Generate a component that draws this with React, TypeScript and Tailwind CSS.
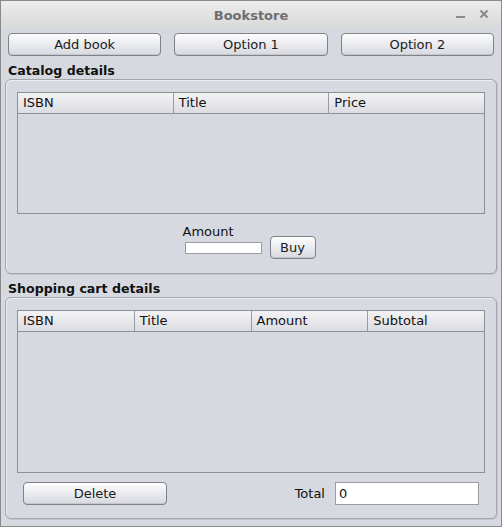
import React from 'react';

const font = { fontFamily: '"DejaVu Sans", "Noto Sans", sans-serif' };

const SwingButton: React.FC<{ label: string; className?: string }> = ({ label, className = '' }) => (
  <button
    className={`h-[23px] rounded-[4px] border border-[#80828a] bg-gradient-to-b from-[#fdfdfe] to-[#d7d9df] text-[13px] text-[#1b1b22] shadow-[inset_0_-1px_0_#c4c6cc] ${className}`}
  >
    {label}
  </button>
);

const Table: React.FC<{ columns: string[]; height: string }> = ({ columns, height }) => (
  <div className={`border border-[#8e9096] bg-[#d6d9df] ${height}`}>
    <div className="flex h-[21px] border-b border-[#8e9096] bg-gradient-to-b from-[#f3f3f5] to-[#dcdde2]">
      {columns.map((c, i) => (
        <div
          key={c}
          className={`flex flex-1 items-center pl-[5px] text-[13px] text-[#111] ${i < columns.length - 1 ? 'border-r border-[#9a9ca2]' : ''}`}
        >
          {c}
        </div>
      ))}
    </div>
  </div>
);

const Section: React.FC<{ title: string; children: React.ReactNode; className?: string }> = ({ title, children, className = '' }) => (
  <div className="flex flex-col">
    <div className="h-[15px] pl-[3px] text-[12.6px] font-bold leading-[15px] text-[#111]">{title}</div>
    <div
      className={`rounded-[6px] border border-[#a4a6ac] bg-[#d6d9df] shadow-[inset_1px_1px_0_#eceef1,1px_1px_0_#c2c4c9] ${className}`}
    >
      {children}
    </div>
  </div>
);

export default function App() {
  return (
    <div style={font} className="flex h-[527px] w-[502px] flex-col overflow-hidden border border-[#8a8a8a] bg-[#d6d9df]">
      {/* title bar */}
      <div className="relative flex h-[26px] items-center justify-center bg-gradient-to-b from-[#ececec] to-[#dadada] pt-[3px]">
        <span className="text-[13px] font-bold text-[#6e6e6e]">Bookstore</span>
        <div className="absolute right-[12px] top-[8px] flex items-center gap-[14px] text-[#8a8a8a]">
          <svg width="9" height="10" viewBox="0 0 9 10">
            <rect x="0" y="7" width="9" height="2" fill="currentColor" />
          </svg>
          <svg width="10" height="10" viewBox="0 0 10 10">
            <path d="M1.5 1.5 L8.5 8.5 M8.5 1.5 L1.5 8.5" stroke="currentColor" strokeWidth="2" />
          </svg>
        </div>
      </div>

      {/* body */}
      <div className="flex flex-1 flex-col px-[4px] pt-[6px]">
        <div className="flex gap-[13px] px-[3px]">
          <SwingButton label="Add book" className="w-[154px]" />
          <SwingButton label="Option 1" className="w-[154px]" />
          <SwingButton label="Option 2" className="w-[154px]" />
        </div>

        <div className="mt-[7px]">
          <Section title="Catalog details" className="mt-[1px] h-[195px] px-[11px] pt-[12px]">
            <Table columns={['ISBN', 'Title', 'Price']} height="h-[122px]" />
            <div className="mt-[10px] flex items-start justify-center gap-[8px] pr-[4px]">
              <div className="flex flex-col">
                <span className="text-[13px] leading-[15px] text-[#111]">Amount</span>
                <div className="ml-[2px] mt-[3px] h-[12px] w-[77px] border border-[#9a9ca2] bg-white" />
              </div>
              <SwingButton label="Buy" className="mt-[12px] w-[46px]" />
            </div>
          </Section>
        </div>

        <div className="mt-[7px]">
          <Section title="Shopping cart details" className="mt-[1px] h-[222px] px-[11px] pt-[12px]">
            <Table columns={['ISBN', 'Title', 'Amount', 'Subtotal']} height="h-[163px]" />
            <div className="mt-[9px] flex items-center">
              <SwingButton label="Delete" className="ml-[6px] w-[144px]" />
              <span className="ml-auto mr-[10px] text-[13px] text-[#111]">Total</span>
              <div className="mr-[6px] flex h-[23px] w-[144px] items-center border border-[#9a9ca2] bg-white pl-[3px] text-[13px] text-[#111]">
                0
              </div>
            </div>
          </Section>
        </div>
      </div>
    </div>
  );
}
